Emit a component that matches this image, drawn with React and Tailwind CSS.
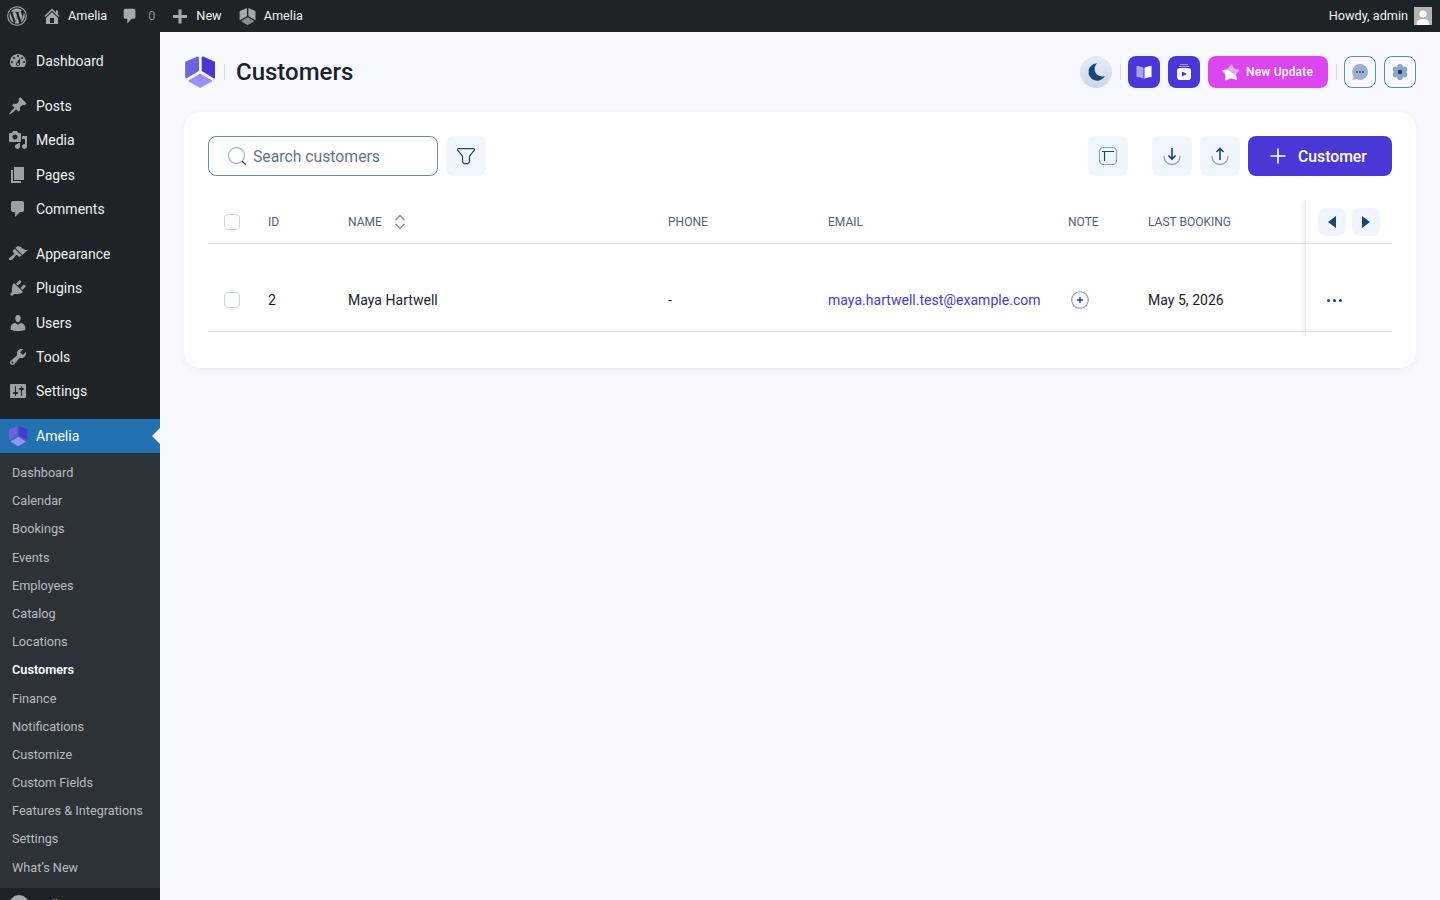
import React from "react";

const icons = {
  dashboard:
    "M3.76 16h12.48c1.1-1.37 1.76-3.11 1.76-5 0-4.42-3.58-8-8-8s-8 3.58-8 8c0 1.89.66 3.63 1.76 5zM10 4c.55 0 1 .45 1 1s-.45 1-1 1-1-.45-1-1 .45-1 1-1zM6 6c.55 0 1 .45 1 1s-.45 1-1 1-1-.45-1-1 .45-1 1-1zm8 0c.55 0 1 .45 1 1s-.45 1-1 1-1-.45-1-1 .45-1 1-1zm-5.37 5.55L12 7v6c0 1.1-.9 2-2 2s-2-.9-2-2c0-.57.24-1.08.63-1.45zM4 10c.55 0 1 .45 1 1s-.45 1-1 1-1-.45-1-1 .45-1 1-1zm12 0c.55 0 1 .45 1 1s-.45 1-1 1-1-.45-1-1 .45-1 1-1zm-5 3c0-.55-.45-1-1-1s-1 .45-1 1 .45 1 1 1 1-.45 1-1z",
  posts:
    "M10.44 3.02l1.82-1.82 6.36 6.35-1.83 1.82c-1.05-.68-2.48-.57-3.41.36l-.75.75c-.92.93-1.04 2.35-.35 3.41l-1.83 1.82-2.41-2.41-2.8 2.79c-.42.42-3.38 2.71-3.8 2.29s1.86-3.39 2.28-3.81l2.79-2.79L4.1 9.36l1.83-1.82c1.05.69 2.48.57 3.4-.36l.75-.75c.93-.92 1.05-2.35.36-3.41z",
  media:
    "M13 11V4c0-.55-.45-1-1-1h-1.67L9 1H5L3.67 3H2c-.55 0-1 .45-1 1v7c0 .55.45 1 1 1h10c.55 0 1-.45 1-1zM7 4.5c1.38 0 2.5 1.12 2.5 2.5S8.38 9.5 7 9.5 4.5 8.38 4.5 7 5.62 4.5 7 4.5zM14 6h5v10.5c0 1.38-1.12 2.5-2.5 2.5S14 17.88 14 16.5s1.12-2.5 2.5-2.5c.17 0 .34.02.5.05V9h-3V6zm-4 8.05V13h2v3.5c0 1.38-1.12 2.5-2.5 2.5S7 17.88 7 16.5 8.12 14 9.5 14c.17 0 .34.02.5.05z",
  pages: "M6 15V2h10v13H6zm-1 1h8v2H3V5h2v11z",
  comments:
    "M5 2h9c1.1 0 2 .9 2 2v7c0 1.1-.9 2-2 2h-2l-5 5v-5H5c-1.1 0-2-.9-2-2V4c0-1.1.9-2 2-2z",
  appearance:
    "M14.48 11.06L7.41 3.99l1.5-1.5c.5-.56 2.3-.47 3.51.32 1.21.8 1.43 1.28 2.91 2.1 1.18.64 2.45 1.26 4.45.85zm-.71.71L6.7 4.7 4.93 6.47c-.39.39-.39 1.02 0 1.41l1.06 1.06c.39.39.39 1.03 0 1.42-.6.6-1.43 1.11-2.21 1.69-.35.26-.7.53-1.01.84C1.43 13.23.4 14.89 1.4 15.9c.99.99 2.66-.03 3.99-1.36.31-.31.58-.66.84-1.01.58-.78 1.09-1.61 1.69-2.21.39-.39 1.02-.39 1.41 0l1.06 1.06c.39.39 1.02.39 1.41 0z",
  plugins:
    "M13.11 4.36L9.87 7.6 8 5.73l3.24-3.24c.35-.34 1.05-.2 1.56.32.52.51.66 1.21.31 1.55zm-8 1.77l.91-1.12 9.01 9.01-1.19.84c-.71.71-2.63 1.16-3.82 1.16H6.14L4.9 17.26c-.59.59-1.54.59-2.12 0-.59-.58-.59-1.53 0-2.12l1.24-1.24v-3.88c0-1.13.4-3.19 1.09-3.89zm7.26 3.97l3.24-3.24c.34-.35 1.04-.21 1.55.31.52.51.66 1.21.31 1.55l-3.24 3.25z",
  users:
    "M10 9.25c-2.27 0-2.73-3.44-2.73-3.44C7 4.02 7.82 2 9.97 2c2.16 0 2.98 2.02 2.71 3.81 0 0-.41 3.44-2.68 3.44zm0 2.57L12.72 10c2.39 0 4.52 2.33 4.52 4.53v2.49s-3.65 1.13-7.24 1.13c-3.65 0-7.24-1.13-7.24-1.13v-2.49c0-2.25 1.94-4.48 4.47-4.48z",
  tools:
    "M16.68 9.77c-1.34 1.34-3.3 1.67-4.95.99l-5.41 6.52c-.99.99-2.59.99-3.58 0s-.99-2.59 0-3.57l6.52-5.42c-.68-1.65-.35-3.61.99-4.95 1.28-1.28 3.12-1.62 4.72-1.06l-2.89 2.89 2.82 2.82 2.86-2.87c.53 1.58.18 3.39-1.08 4.65zM3.81 16.21c.4.39 1.04.39 1.43 0 .4-.4.4-1.04 0-1.43-.39-.4-1.03-.4-1.43 0-.39.39-.39 1.03 0 1.43z",
  settings:
    "M18 16V4c0-.55-.45-1-1-1H3c-.55 0-1 .45-1 1v12c0 .55.45 1 1 1h14c.55 0 1-.45 1-1zM8 11h1c.55 0 1 .45 1 1s-.45 1-1 1H8v1.5c0 .28-.22.5-.5.5s-.5-.22-.5-.5V13H6c-.55 0-1-.45-1-1s.45-1 1-1h1V5.5c0-.28.22-.5.5-.5s.5.22.5.5V11zm5-2h-1c-.55 0-1-.45-1-1s.45-1 1-1h1V5.5c0-.28.22-.5.5-.5s.5.22.5.5V7h1c.55 0 1 .45 1 1s-.45 1-1 1h-1v5.5c0 .28-.22.5-.5.5s-.5-.22-.5-.5V9z",
  home: "M16 8.5l1.53 1.53-1.06 1.06L10 4.62l-6.47 6.47-1.06-1.06L10 2.5l4 4v-2h2v4zm-6-2.46l6 5.99V18H4v-5.97zM12 17v-5H8v5h4z",
  plus: "M17 9v3h-5.5v5.5h-3V12H3V9h5.5V3.5h3V9H17z",
};

const Dashicon = ({ name, className }) => (
  <svg viewBox="0 0 20 20" className={className} fill="currentColor">
    <path d={icons[name]} />
  </svg>
);

const WpLogo = () => (
  <svg viewBox="0 0 20 20" className="w-5 h-5 text-[#a7aaad]" fill="none">
    <circle cx="10" cy="10" r="9.3" stroke="currentColor" strokeWidth="1.1" />
    <path
      fill="currentColor"
      d="M2.6 10c0 2.9 1.7 5.5 4.2 6.7L3.3 6.9C2.9 7.9 2.6 8.9 2.6 10zm12.4-.4c0-.9-.3-1.6-.6-2.1-.4-.6-.7-1.1-.7-1.7 0-.7.5-1.3 1.2-1.3h.1A7.4 7.4 0 0 0 3.8 5.9h.5c.8 0 2-.1 2-.1.4 0 .5.6.1.6 0 0-.4.1-.9.1l2.8 8.4 1.7-5.1-1.2-3.3c-.4 0-.8-.1-.8-.1-.4 0-.4-.6 0-.6 0 0 1.3.1 2 .1.8 0 2-.1 2-.1.4 0 .5.6.1.6 0 0-.4.1-.9.1l2.8 8.3.8-2.6c.3-1.1.6-1.9.6-2.6zm-4.9 1-2.3 6.7a7.4 7.4 0 0 0 4.5-.1l-.1-.1-2.1-6.5zm6.6-4.4.1.8c0 .8-.1 1.6-.6 2.8l-2.3 6.6a7.4 7.4 0 0 0 2.8-10.2z"
    />
  </svg>
);

// amelia logo, three rounded facets
const AmeliaLogo = ({ className, left, right, bottom }) => (
  <svg viewBox="0 0 32 32" className={className} strokeLinejoin="round" strokeWidth="2">
    <polygon fill={left} stroke={left} points="14,1.500 2.200,6.500 2.200,21.500 14,14.500" />
    <polygon fill={right} stroke={right} points="18.700,1.500 30,6.500 30,21.500 18.700,14.500" />
    <polygon fill={bottom} stroke={bottom} points="16.200,18.500 27,24.800 16.200,31 5.500,24.800" />
  </svg>
);

const mainMenu = [
  [{ label: "Dashboard", icon: "dashboard" }],
  [
    { label: "Posts", icon: "posts" },
    { label: "Media", icon: "media" },
    { label: "Pages", icon: "pages" },
    { label: "Comments", icon: "comments" },
  ],
  [
    { label: "Appearance", icon: "appearance" },
    { label: "Plugins", icon: "plugins" },
    { label: "Users", icon: "users" },
    { label: "Tools", icon: "tools" },
    { label: "Settings", icon: "settings" },
  ],
];

const subMenu = [
  "Dashboard",
  "Calendar",
  "Bookings",
  "Events",
  "Employees",
  "Catalog",
  "Locations",
  "Customers",
  "Finance",
  "Notifications",
  "Customize",
  "Custom Fields",
  "Features & Integrations",
  "Settings",
  "What’s New",
];

const AdminBar = () => (
  <header className="h-8 shrink-0 flex items-center bg-[#1d2327] text-[12.7px] text-[#f0f0f1]">
    <div className="ml-[7px] w-5">
      <WpLogo />
    </div>
    <Dashicon name="home" className="ml-[15px] w-5 h-5 text-[#a7aaad]" />
    <span className="ml-[6px]">Amelia</span>
    <Dashicon name="comments" className="ml-[14px] w-[18px] h-[18px] text-[#a7aaad]" />
    <span className="ml-[9px] text-[#8c8f94]">0</span>
    <Dashicon name="plus" className="ml-[15px] w-5 h-5 text-[#a7aaad]" />
    <span className="ml-[6px]">New</span>
    <AmeliaLogo
      className="ml-[17px] w-[17px] h-[17px]"
      left="#a7aaad"
      right="#a7aaad"
      bottom="#8a8d92"
    />
    <span className="ml-2">Amelia</span>
    <span className="ml-auto">Howdy, admin</span>
    <div className="ml-[6px] mr-2 w-[18px] h-[18px] bg-[#b4b4b4] overflow-hidden flex justify-center">
      <svg viewBox="0 0 18 18" className="w-[18px] h-[18px]" fill="#fff">
        <circle cx="9" cy="7" r="3.6" />
        <path d="M2.500 18c0-4 2.500-6 6.500-6s6.500 2 6.500 6z" />
      </svg>
    </div>
  </header>
);

const Sidebar = () => (
  <aside className="w-40 shrink-0 bg-[#1d2327] pt-[11.8px] overflow-hidden">
    {mainMenu.map((group, i) => (
      <div key={i} className="mb-[10.4px]">
        {group.map((item) => (
          <div
            key={item.label}
            className="h-[34.4px] pl-2 flex items-center gap-2 text-sm text-[#f0f0f1]"
          >
            <Dashicon name={item.icon} className="w-5 h-5 text-[#9ca1a6]" />
            {item.label}
          </div>
        ))}
      </div>
    ))}
    <div className="relative h-[34.4px] pl-2 flex items-center gap-2 bg-[#2271b1] text-sm text-white">
      <AmeliaLogo
        className="w-5 h-5"
        left="#6c63e0"
        right="#4a38d6"
        bottom="#9b90f8"
      />
      Amelia
      <div className="absolute right-0 top-[9px] w-0 h-0 border-y-8 border-r-8 border-y-transparent border-r-[#f8f9ff]" />
    </div>
    <ul className="bg-[#2c3338] pt-[5.2px] pb-[6.3px]">
      {subMenu.map((item) => (
        <li
          key={item}
          className={
            item === "Customers"
              ? "h-[28.2px] pl-3 flex items-center text-[12.7px] font-semibold text-white"
              : "h-[28.2px] pl-3 flex items-center text-[12.7px] text-[#b8bcc0]"
          }
        >
          {item}
        </li>
      ))}
    </ul>
    <div className="h-[34px] pl-[9px] flex items-center gap-[7px] text-[13px] text-[#a7aaad]">
      <div className="w-5 h-5 rounded-full bg-[#a7aaad]" />
      Collapse Menu
    </div>
  </aside>
);

const IconBtn = ({ children }) => (
  <button className="w-10 h-10 rounded-lg bg-[#f0f5ff] flex items-center justify-center">
    {children}
  </button>
);

const Gear = () => (
  <svg viewBox="0 0 18 18" className="w-[18px] h-[18px]" fill="#8fa5c6">
    <circle cx="9" cy="3.800" r="2.800" />
    <circle cx="9" cy="14.200" r="2.800" />
    <circle cx="4.500" cy="6.400" r="2.800" />
    <circle cx="13.500" cy="6.400" r="2.800" />
    <circle cx="4.500" cy="11.600" r="2.800" />
    <circle cx="13.500" cy="11.600" r="2.800" />
    <circle cx="9" cy="9" r="4" />
    <circle cx="9" cy="9" r="2.300" fill="#1a4478" />
  </svg>
);

const HeaderActions = () => (
  <div className="flex items-center gap-2">
    <div className="w-8 h-8 rounded-full bg-gradient-to-b from-[#e6ecf6] to-[#c9d8eb] flex items-center justify-center">
      <svg viewBox="0 0 24 24" className="w-[22px] h-[22px]" fill="#1a4478">
        <path d="M13.500 2.500a9.500 9.500 0 1 0 8.300 13.800c-.8.300-2 .5-3 .5-5 0-8.300-3.600-8.300-8 0-2.700 1.100-4.900 3-6.300z" />
      </svg>
    </div>
    <div className="w-px h-4 -mr-px bg-[#d5dce6]" />
    <button className="w-8 h-8 rounded-lg bg-[#4a38d6] flex items-center justify-center">
      <svg viewBox="0 0 18 18" className="w-[18px] h-[18px]">
        <path fill="#a79ff0" d="M1.500 3c2.600 0 5 .6 7 1.800v11C6.500 14.800 4 14 1.500 14z" />
        <path fill="#fff" d="M16.500 3c-2.600 0-5 .6-7 1.800v11c2-1 4.500-1.800 7-1.800z" />
      </svg>
    </button>
    <button className="w-8 h-8 rounded-lg bg-[#4a38d6] flex items-center justify-center">
      <svg viewBox="0 0 18 18" className="w-[18px] h-[18px]">
        <path fill="#a79ff0" d="M5 1h8v1H5zM4 3h10v1H4z" />
        <rect x="2" y="5" width="14" height="12" rx="3" fill="#fff" />
        <path fill="#4a38d6" d="M7 8.500l5 2.500-5 2.500z" />
      </svg>
    </button>
    <button className="w-[120px] h-8 rounded-lg bg-[#dd45ee] flex items-center pl-[13px] gap-[6px] text-xs font-medium tracking-[0.2px] text-white">
      <svg viewBox="0 0 20 20" className="w-[19px] h-[19px]" strokeLinejoin="round">
        <polygon
          fill="#f2a6f8"
          stroke="#f2a6f8"
          strokeWidth="1.500"
          points="11,2 13.500,6.500 18.500,7.500 15,11.500 16,17 10.500,15 5,17.500 5.500,11.500 2,8 7.500,6.500"
        />
        <polygon
          fill="#fff"
          stroke="#fff"
          strokeWidth="1.500"
          points="2,8 7,8 15,14 16,17 10.500,15 5,17.500 5.500,11.500"
        />
      </svg>
      New Update
    </button>
    <div className="w-px h-4 -mr-px bg-[#d5dce6]" />
    <button className="w-8 h-8 rounded-lg border border-[#5d8bc2] flex items-center justify-center">
      <svg viewBox="0 0 18 18" className="w-[18px] h-[18px]">
        <path fill="#9fb1cd" d="M9 1a8 8 0 1 1-3.700 15.100L1.500 17l1-3.600A8 8 0 0 1 9 1z" />
        <circle cx="6" cy="9" r="0.900" fill="#1a4478" />
        <circle cx="9" cy="9" r="0.900" fill="#1a4478" />
        <circle cx="12" cy="9" r="0.900" fill="#1a4478" />
      </svg>
    </button>
    <button className="w-8 h-8 rounded-lg border border-[#5d8bc2] flex items-center justify-center">
      <Gear />
    </button>
  </div>
);

const Toolbar = () => (
  <div className="flex items-center">
    <div className="w-[230px] h-10 rounded-lg border border-[#5d8bc2] flex items-center pl-[18px] gap-[6px] text-[15.75px] text-[#5f7390]">
      <svg viewBox="0 0 20 20" className="w-5 h-5" fill="none">
        <circle cx="9.500" cy="9.500" r="8" stroke="#a3b5cf" strokeWidth="1.300" />
        <path d="M15.500 15.500l3 3" stroke="#1a4478" strokeWidth="1.300" strokeLinecap="round" />
      </svg>
      <span className="pt-0.5">Search customers</span>
    </div>
    <div className="ml-2">
      <IconBtn>
        <svg viewBox="0 0 20 20" className="w-5 h-5" fill="none">
          <path
            d="M2.500 2.700h15c.8 0 1.200.9.800 1.500l-4.800 6v5c0 1.700-1.300 2.500-3.500 2.500s-3.500-.8-3.500-2.500v-5l-4.800-6c-.4-.6 0-1.500.8-1.500z"
            stroke="#1a4478"
            strokeWidth="1.200"
          />
        </svg>
      </IconBtn>
    </div>
    <div className="ml-auto">
      <IconBtn>
        <svg viewBox="0 0 20 20" className="w-5 h-5" fill="none">
          <rect x="1.500" y="1.500" width="17" height="17" rx="4" stroke="#8fa5c6" strokeWidth="1.200" />
          <path d="M4 5.500h12M6.500 5.500v9.500" stroke="#1a4478" strokeWidth="1.200" />
        </svg>
      </IconBtn>
    </div>
    <div className="ml-6">
      <IconBtn>
        <svg viewBox="0 0 20 20" className="w-5 h-5" fill="none">
          <path d="M2 10.500a8 8 0 0 0 16 0" stroke="#8fa5c6" strokeWidth="1.300" strokeLinecap="round" />
          <path d="M10 2v11M6.500 9.500L10 13l3.500-3.500" stroke="#1a4478" strokeWidth="1.600" />
        </svg>
      </IconBtn>
    </div>
    <div className="ml-2">
      <IconBtn>
        <svg viewBox="0 0 20 20" className="w-5 h-5" fill="none">
          <path d="M2 10.500a8 8 0 0 0 16 0" stroke="#8fa5c6" strokeWidth="1.300" strokeLinecap="round" />
          <path d="M10 14V2.500M6.500 6L10 2.500 13.500 6" stroke="#1a4478" strokeWidth="1.600" />
        </svg>
      </IconBtn>
    </div>
    <button className="ml-2 w-36 h-10 rounded-lg bg-[#4a38d6] flex items-center pl-[22px] gap-3 text-[15.75px] font-medium text-white">
      <svg viewBox="0 0 16 16" className="w-4 h-4" fill="none">
        <path d="M8 .5v15M.5 8h15" stroke="#fff" strokeWidth="1.600" />
      </svg>
      <span className="pt-0.5">Customer</span>
    </button>
  </div>
);

const Checkbox = () => (
  <div className="w-4 h-4 rounded-[4px] border border-[#c9d7ea] bg-white" />
);

const Table = () => (
  <div className="mt-6 flex">
    <div className="w-[1097px]">
      <div className="h-11 border-b border-[#e2e2e4] grid grid-cols-[60px_80px_320px_160px_240px_80px_157px] items-center text-xs text-[#4d6285]">
        <div className="pl-4 flex">
          <Checkbox />
        </div>
        <div>ID</div>
        <div className="flex items-center gap-3">
          NAME
          <svg viewBox="0 0 12 16" className="w-3 h-4" fill="none">
            <path d="M1.500 6L6 1.500 10.500 6M1.500 10L6 14.500 10.500 10" stroke="#7f8fa8" strokeWidth="1.500" />
          </svg>
        </div>
        <div>PHONE</div>
        <div>EMAIL</div>
        <div>NOTE</div>
        <div>LAST BOOKING</div>
      </div>
      <div className="mt-6 h-16 border-b border-[#e2e2e4] grid grid-cols-[60px_80px_320px_160px_240px_80px_157px] items-center text-sm tracking-[0.03px] text-[#1a2230]">
        <div className="pl-4 flex">
          <Checkbox />
        </div>
        <div>2</div>
        <div>Maya Hartwell</div>
        <div>-</div>
        <div className="text-[#4a38d6]">maya.hartwell.test@example.com</div>
        <div className="pl-[3px]">
          <svg viewBox="0 0 18 18" className="w-[18px] h-[18px]" fill="none">
            <circle cx="9" cy="9" r="8.300" stroke="#7f9bc4" strokeWidth="1.100" />
            <path d="M9 6v6M6 9h6" stroke="#1a4478" strokeWidth="1.400" />
          </svg>
        </div>
        <div>May 5, 2026</div>
      </div>
    </div>
    <div className="w-[87px] pb-1 border-l border-[#ececee] shadow-[-3px_0_5px_rgba(30,40,70,0.06)] [clip-path:inset(0_0_0_-8px)]">
      <div className="h-11 border-b border-[#e2e2e4] pl-3 flex items-center gap-[6px]">
        <button className="w-7 h-7 rounded-lg bg-[#f0f5ff] flex items-center justify-center">
          <div className="w-0 h-0 border-y-[6px] border-r-[8px] border-y-transparent border-r-[#1a4478]" />
        </button>
        <button className="w-7 h-7 rounded-lg bg-[#f0f5ff] flex items-center justify-center">
          <div className="w-0 h-0 border-y-[6px] border-l-[8px] border-y-transparent border-l-[#1a4478]" />
        </button>
      </div>
      <div className="mt-6 h-16 border-b border-[#e2e2e4] pl-[21px] pt-px flex items-center gap-[3px]">
        <div className="w-[3px] h-[3px] rounded-full bg-[#1a4478]" />
        <div className="w-[3px] h-[3px] rounded-full bg-[#1a4478]" />
        <div className="w-[3px] h-[3px] rounded-full bg-[#1a4478]" />
      </div>
    </div>
  </div>
);

const App = () => {
  return (
    <div className="h-screen overflow-hidden flex flex-col font-[Roboto,sans-serif]">
      <AdminBar />
      <div className="flex-1 min-h-0 flex">
        <Sidebar />
        <main className="flex-1 bg-[#f8f9ff] px-6 pt-6">
          <div className="h-8 flex items-center">
            <AmeliaLogo
              className="w-8 h-8"
              left="#6c63e0"
              right="#4a38d6"
              bottom="#9b90f8"
            />
            <div className="ml-2 w-px h-4 bg-[#d5dce6]" />
            <h1 className="ml-[11px] text-2xl font-medium text-[#1a2230]">
              Customers
            </h1>
            <div className="ml-auto">
              <HeaderActions />
            </div>
          </div>
          <section className="mt-6 bg-white rounded-2xl px-6 pt-6 pb-8 shadow-[0_2px_6px_rgba(60,80,130,0.08)]">
            <Toolbar />
            <Table />
          </section>
        </main>
      </div>
    </div>
  );
};

export default App;
